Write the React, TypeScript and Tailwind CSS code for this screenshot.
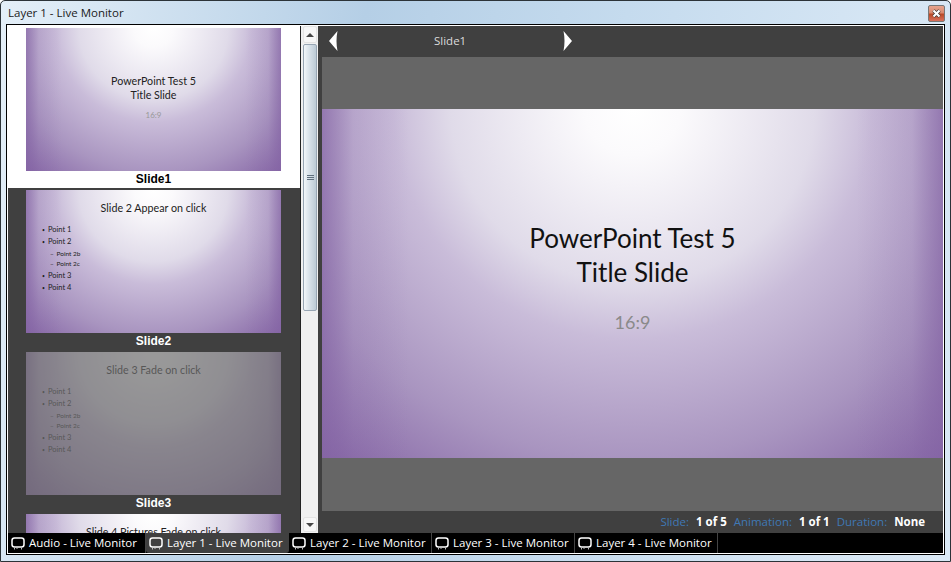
const sans = "font-['Open_Sans','Noto_Sans',sans-serif]";
const lato = "font-['Lato','Open_Sans',sans-serif]";
const arial = "font-['Liberation_Sans',Arial,sans-serif]";
const gradient =
  "bg-[linear-gradient(90deg,#8565a5b3_0%,#8565a526_5%,#8565a500_14%,#8565a500_86%,#8565a526_95%,#8565a5b3_100%),radial-gradient(ellipse_77%_132%_at_50%_0%,#ffffff_0%,#fbfafc_10%,#e0dbe9_38%,#c9bcd9_50%,#a995c0_76%,#8565a5_100%)]";

function Bubble() {
  return (
    <svg width="14" height="13" viewBox="0 0 14 13" className="shrink-0">
      <rect x="1" y="1" width="12" height="9" rx="2.5" fill="none" stroke="white" strokeWidth="1.5" />
      <path d="M3.5 11v1.5M6 11v1M10.5 11v1.5" stroke="#bbb" strokeWidth="1" />
    </svg>
  );
}

function Tab({ label, active, w }: { label: string; active?: boolean; w: string }) {
  return (
    <div
      className={`flex items-center gap-[4px] pl-[3px] h-[20px] ${w} text-[11.5px] text-white ${sans} ${
        active ? "bg-[#404040] rounded-b-[3px]" : "border-r border-[#444]"
      }`}
    >
      <Bubble />
      <span className="whitespace-nowrap">{label}</span>
    </div>
  );
}

function Points() {
  const Main = ({ t }: { t: string }) => (
    <div className="flex items-center leading-[12.3px] text-[7.5px]">
      <span className="w-[6px] text-[5px]">•</span>
      <span>{t}</span>
    </div>
  );
  const Sub = ({ t }: { t: string }) => (
    <div className="flex pl-[8px] leading-[10.5px] text-[6.5px] font-normal">
      <span className="w-[6.5px]">–</span>
      <span>{t}</span>
    </div>
  );
  return (
    <div className="flex flex-col pl-[16px] mt-[8px] text-[#222]">
      <Main t="Point 1" />
      <Main t="Point 2" />
      <Sub t="Point 2b" />
      <Sub t="Point 2c" />
      <Main t="Point 3" />
      <Main t="Point 4" />
    </div>
  );
}

function Row({
  label,
  selected,
  children,
  dim,
}: {
  label: string;
  selected?: boolean;
  children: React.ReactNode;
  dim?: boolean;
}) {
  return (
    <div className={`flex flex-col items-center shrink-0 h-[162px] pt-[2px] pr-[1px] ${selected ? "bg-white" : ""}`}>
      <div className={`relative w-[255px] h-[143px] shrink-0 overflow-hidden ${gradient} ${lato}`}>
        {children}
        {dim && <div className="absolute inset-0 bg-[#6e6e6e]/70" />}
      </div>
      <div className={`text-[12px] leading-[16px] font-bold ${arial} ${selected ? "text-black" : "text-white"}`}>{label}</div>
    </div>
  );
}

function ScrollBar() {
  return (
    <div className="w-[17px] shrink-0 bg-[#f0f0f0] flex flex-col items-start pl-[2px]">
      <div className="h-[17px] w-[14px] flex items-center justify-center bg-[#f6f6f6] border border-[#e3e3e3] rounded-[2px]">
        <div className="w-0 h-0 border-x-[4px] border-x-transparent border-b-[4px] border-b-[#444]" />
      </div>
      <div className="mt-[1px] h-[267px] w-[14px] flex flex-col items-center justify-center gap-[1px] border border-[#97a5b3] rounded-[2px] bg-linear-to-r from-[#f2f6f9] via-[#d5dfe7] to-[#bccad5]">
        <div className="w-[7px] h-px bg-[#5f6f7d]" />
        <div className="w-[7px] h-px bg-[#5f6f7d]" />
        <div className="w-[7px] h-px bg-[#5f6f7d]" />
      </div>
      <div className="flex-1" />
      <div className="h-[15px] w-[14px] mb-[1px] flex items-center justify-center bg-[#f6f6f6] border border-[#e3e3e3] rounded-[2px]">
        <div className="w-0 h-0 border-x-[4px] border-x-transparent border-t-[4px] border-t-[#444]" />
      </div>
    </div>
  );
}

export default function App() {
  return (
    <div className="w-[951px] h-[562px] overflow-hidden flex flex-col border border-[#2c3338] rounded-t-[5px] bg-[linear-gradient(100deg,#e4eff8_0%,#b5cfe6_35%,#c5dbee_60%,#d6e6f4_85%,#d9e8f5_100%)]">
      <div className="h-[23px] shrink-0 flex items-center justify-between pl-[7px] pr-[5px]">
        <span className={`text-[11.5px] text-[#1a1a1a] ${sans}`}>Layer 1 - Live Monitor</span>
        <div className="w-[17px] h-[17px] mt-[1px] rounded-[2px] border border-[#777] bg-[linear-gradient(180deg,#e6a48e_0%,#d98a70_45%,#b94a28_55%,#d9705a_100%)] flex items-center justify-center">
          <svg width="9" height="9" viewBox="0 0 9 9">
            <path d="M1.5 1.5 L7.5 7.5 M7.5 1.5 L1.5 7.5" stroke="#333" strokeWidth="3.4" />
            <path d="M1.5 1.5 L7.5 7.5 M7.5 1.5 L1.5 7.5" stroke="white" strokeWidth="2.2" />
          </svg>
        </div>
      </div>
      <div className="flex-1 min-h-0 mx-[5px] mb-[6px] bg-black p-px">
        <div className="h-full bg-white p-px">
          <div className="h-full bg-black flex flex-col">
            <div className="flex-1 min-h-0 flex">
              <div className="w-[292px] shrink-0 bg-[#404040] overflow-hidden flex flex-col">
                <Row label="Slide1" selected>
                  <div className="flex flex-col items-center pt-[46px] text-[10.7px] leading-[14px] text-[#222]">
                    <div>PowerPoint Test 5</div>
                    <div>Title Slide</div>
                    <div className="text-[8px] text-[#999] mt-[6px]">16:9</div>
                  </div>
                </Row>
                <Row label="Slide2">
                  <div className="text-center pt-[10px] text-[10.7px] leading-[16px] text-[#222]">Slide 2 Appear on click</div>
                  <Points />
                </Row>
                <Row label="Slide3" dim>
                  <div className="text-center pt-[10px] text-[10.7px] leading-[16px] text-[#222]">Slide 3 Fade on click</div>
                  <Points />
                </Row>
                <Row label="Slide4">
                  <div className="text-center pt-[10px] text-[10.7px] leading-[16px] text-[#222]">Slide 4 Pictures Fade on click</div>
                </Row>
              </div>
              <div className="w-px bg-[#222] shrink-0" />
              <ScrollBar />
              <div className="flex-1 min-w-0 bg-[#404040] flex flex-col pl-[4px]">
                <div className="h-[31px] shrink-0 flex items-center -ml-[4px] pb-[1px]">
                  <svg width="9" height="20" viewBox="0 0 9 20" className="ml-[11px]">
                    <path d="M8.5 0 L0 10 L8.5 20 Q6.5 10 8.5 0 Z" fill="white" />
                  </svg>
                  <span className={`ml-[96px] text-[11.5px] text-[#ddd] ${sans}`}>Slide1</span>
                  <svg width="9" height="20" viewBox="0 0 9 20" className="ml-[97px]">
                    <path d="M0.5 0 L9 10 L0.5 20 Q2.5 10 0.5 0 Z" fill="white" />
                  </svg>
                </div>
                <div className="flex-1 min-h-0 bg-[#666666] flex flex-col pt-[52px]">
                  <div className={`h-[349px] shrink-0 ${gradient} ${lato} flex flex-col items-center pt-[112px] text-[26px] leading-[34px] text-[#111]`}>
                    <div>PowerPoint Test 5</div>
                    <div>Title Slide</div>
                    <div className="text-[18px] text-[#8a8a8a] mt-[16px]">16:9</div>
                  </div>
                </div>
                <div className={`h-[22px] shrink-0 flex items-center justify-end pr-[18px] text-[11.5px] ${sans}`}>
                  <span className="text-[#3f78b5]">Slide:</span>
                  <span className="ml-[7px] font-bold text-white">1 of 5</span>
                  <span className="ml-[7px] text-[#3f78b5]">Animation:</span>
                  <span className="ml-[7px] font-bold text-white">1 of 1</span>
                  <span className="ml-[7px] text-[#3f78b5]">Duration:</span>
                  <span className="ml-[7px] font-bold text-white">None</span>
                </div>
              </div>
            </div>
            <div className="h-[20px] shrink-0 bg-black flex">
              <Tab label="Audio - Live Monitor" w="w-[138px]" />
              <Tab label="Layer 1 - Live Monitor" active w="w-[143px]" />
              <Tab label="Layer 2 - Live Monitor" w="w-[143px]" />
              <Tab label="Layer 3 - Live Monitor" w="w-[143px]" />
              <Tab label="Layer 4 - Live Monitor" w="w-[143px]" />
            </div>
          </div>
        </div>
      </div>
    </div>
  );
}
